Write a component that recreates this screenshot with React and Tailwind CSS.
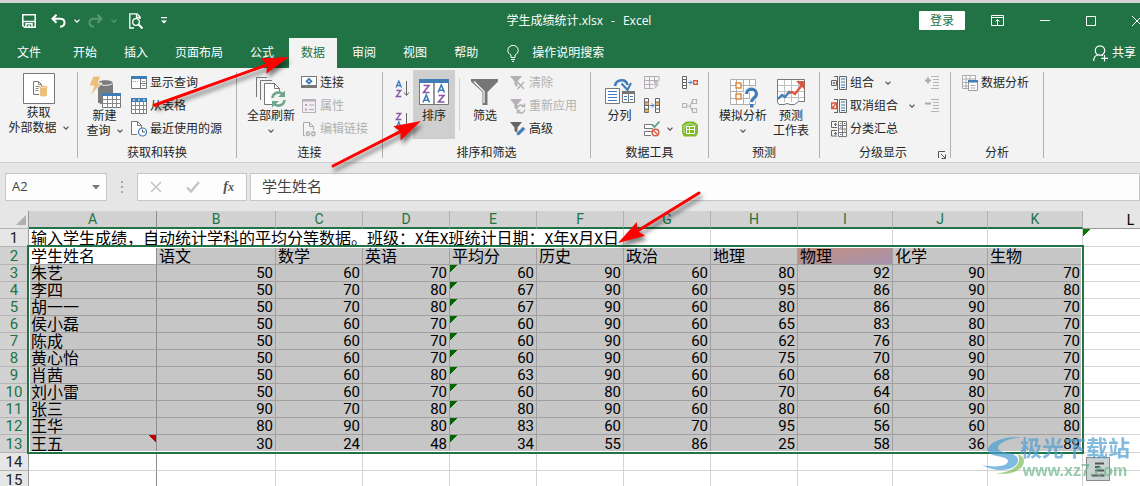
import clsx from "clsx";

const tabs = ["开始", "插入", "页面布局", "公式", "数据", "审阅", "视图", "帮助"];

const columns = [
  { id: "A", width: "w-[128px]" },
  { id: "B", width: "w-[119px]" },
  { id: "C", width: "w-[87px]" },
  { id: "D", width: "w-[87px]" },
  { id: "E", width: "w-[87px]" },
  { id: "F", width: "w-[87px]" },
  { id: "G", width: "w-[87px]" },
  { id: "H", width: "w-[87px]" },
  { id: "I", width: "w-[95px]" },
  { id: "J", width: "w-[95px]" },
  { id: "K", width: "w-[95px]" },
  { id: "L", width: "w-[95px]" },
];

const titleText = "输入学生成绩，自动统计学科的平均分等数据。班级：X年X班统计日期：X年X月X日";

const fields = ["学生姓名", "语文", "数学", "英语", "平均分", "历史", "政治", "地理", "物理", "化学", "生物"];

const students = [
  ["朱艺", 50, 60, 70, 60, 90, 60, 80, 92, 90, 70],
  ["李四", 50, 70, 80, 67, 90, 60, 95, 86, 90, 80],
  ["胡一一", 50, 70, 80, 67, 90, 60, 80, 86, 90, 70],
  ["侯小磊", 50, 60, 70, 60, 90, 60, 65, 83, 80, 70],
  ["陈成", 50, 60, 70, 60, 90, 60, 62, 76, 80, 70],
  ["黄心怡", 50, 60, 70, 60, 90, 60, 75, 70, 90, 70],
  ["肖茜", 50, 60, 80, 63, 90, 60, 60, 68, 90, 70],
  ["刘小雷", 50, 60, 70, 60, 80, 60, 70, 64, 80, 70],
  ["张三", 90, 70, 80, 80, 90, 60, 80, 60, 90, 80],
  ["王华", 80, 90, 80, 83, 60, 70, 95, 56, 60, 80],
  ["王五", 30, 24, 48, 34, 55, 86, 25, 58, 36, 89],
];

function Chevron({ className = "text-[#555]" }) {
  return (
    <svg viewBox="0 0 6 4" className={clsx("h-1 w-1.5 shrink-0", className)} fill="none" stroke="currentColor" strokeWidth="1.2">
      <path d="M0.5 0.7 3 3.2 5.5 0.7" />
    </svg>
  );
}

/* ---------- small 16px ribbon icons ---------- */

function Icon({ children }) {
  return (
    <svg viewBox="0 0 16 16" className="h-4 w-4 shrink-0" fill="none">
      {children}
    </svg>
  );
}

const ShowQueriesIcon = () => (
  <Icon>
    <path d="M.5 1.5h15v12H.5z" fill="#fff" stroke="#777" />
    <path d="M0 1h16v3H0z" fill="#3f7cb8" />
    <path d="M9.5 4v9.5M9.5 8.5h6" stroke="#777" />
    <path d="M2 6.5h1m1 0h1m1 0h1M11 6.5h3M11 10.5h3" stroke="#999" />
  </Icon>
);

const FromTableIcon = () => (
  <Icon>
    <path d="M.5 1.5h15v14H.5z" fill="#fff" stroke="#777" />
    <path d="M0 0h16v4H0z" fill="#3f7cb8" />
    <path d="M2 2h2M7 2h2M12 2h2" stroke="#fff" />
    <path d="M0 7.5h16M0 11.5h16M4.5 4v12M8.5 4v12M12.5 4v12" stroke="#888" />
  </Icon>
);

const RecentIcon = () => (
  <Icon>
    <path d="M6 13.5H.5V.5h6l4 4V7" fill="#fff" stroke="#777" />
    <path d="M6.5.5v4h4" stroke="#777" />
    <circle cx="11.5" cy="11" r="4" fill="#fff" stroke="#3f7cb8" strokeWidth="1.2" />
    <path d="M11.5 8.5V11H14" stroke="#555" />
  </Icon>
);

const ConnectionIcon = () => (
  <Icon>
    <path d="M3 1.5H.5v10h15v-10H13" fill="#fff" stroke="#777" />
    <path d="M.5 1.5h15v9H.5z" fill="#fff" stroke="#777" />
    <path d="M0 11h16v2H0z" fill="#777" />
    <path d="m8 3.800 2.400 2.400L8 8.600 5.600 6.200z" fill="#fff" stroke="#3f7cb8" strokeWidth="1.8" />
  </Icon>
);

const PropertiesIcon = () => (
  <Icon>
    <path d="M1.5 1.5h13v13h-13z" fill="#f3edf3" stroke="#b9b1b9" />
    <path d="M1 1h14v2.500H1z" fill="#b9b1b9" />
    <path d="M4 6h2v2H4zM4 10.5h2v2H4z" fill="#b0a8b0" />
    <path d="M8 7h5M8 11.5h5" stroke="#b0a8b0" />
  </Icon>
);

const EditLinksIcon = () => (
  <Icon>
    <path d="M4 14.5H2.5v-13h6l4 4V9" fill="#f6f2f6" stroke="#aaa" />
    <path d="M8.5 1.5v4h4" stroke="#aaa" />
    <path d="M8.5 11H6.7a1.8 1.8 0 0 0 0 3.5h1.8M10.5 11h2.3a1.8 1.8 0 0 1 0 3.5h-2.3M7.5 12.8h4" stroke="#aaa" strokeWidth="1.3" />
  </Icon>
);

const ClearIcon = () => (
  <Icon>
    <path d="M0 1h12L7.5 6.5V12l-3-2V6.5z" fill="#b8b0b8" />
    <path d="m7.5 7 6.5 7M14 7l-6.5 7" stroke="#b3b3b3" strokeWidth="1.5" />
  </Icon>
);

const ReapplyIcon = () => (
  <Icon>
    <path d="M0 1h12L7.5 6.5V12l-3-2V6.5z" fill="#b8b0b8" />
    <path d="M7 10.5a4 4 0 0 1 7-2M14.5 5.5v3h-3M15 11.5a4 4 0 0 1-7 2M7.5 15.5v-3h3" stroke="#b3b3b3" strokeWidth="1.5" />
  </Icon>
);

const AdvancedIcon = () => (
  <Icon>
    <path d="M0 1h12L7.5 6.5V12l-3-2V6.5z" fill="#666" />
    <path d="m6 15 1-3.5 6-6 2.5 2.5-6 6z" fill="#3f7cb8" stroke="#f3f3f3" strokeWidth=".5" />
    <path d="m6 15 .5-1.800 1.300 1.300z" fill="#fff" />
  </Icon>
);

const FlashFillIcon = () => (
  <Icon>
    <path d="M15 6V1.5H.5v12H9M.5 5.5H14M.5 9.5H9M5.5 1v12M10.5 1v7" stroke="#b5adb5" />
    <path d="M11 6h4l-2 3h2.500L10 15l1.500-4.500H9.500z" fill="#c7bfc7" />
  </Icon>
);

const DuplicatesIcon = () => (
  <Icon>
    <path d="M.5.5h4v14h-4zM11.5.5h4v14h-4z" fill="#fff" stroke="#666" />
    <path d="M1 4h3.500v3.500H1zM1 11h3.500v3H1zM12 4h3v3.500h-3z" fill="#e8b15c" />
    <path d="M0 4h5M0 7.500h5M0 11h5M11 4h5M11 7.500h5M11 11h5" stroke="#666" />
    <path d="M5.500 7.500h4M8 5.500l2 2-2 2" stroke="#3f7cb8" />
  </Icon>
);

const ValidationIcon = () => (
  <Icon>
    <path d="M8 3.5H.5v4H9M8 10.5H.5v4H7" fill="#fff" stroke="#777" />
    <path d="m8 3.5 2.500 2.500L15.500.5" stroke="#5f9f86" strokeWidth="1.8" />
    <circle cx="11.5" cy="11.5" r="3.3" fill="#fff" stroke="#d65a41" strokeWidth="1.5" />
    <path d="m9.5 9.5 4 4" stroke="#d65a41" strokeWidth="1.3" />
  </Icon>
);

const ConsolidateIcon = () => (
  <Icon>
    <path d="M.5 1.5h4v12h-4zM.5 4.5h4M.5 7.5h4M.5 10.5h4" fill="#fff" stroke="#666" />
    <path d="M6 7.5h3.5M8 5.5l2 2-2 2" stroke="#3f7cb8" />
    <path d="M11.7 5.7h3.6v3.6h-3.6z" fill="#fff" stroke="#d65a41" strokeWidth="1.4" />
  </Icon>
);

const RelationsIcon = () => (
  <Icon>
    <path d="M5 8h3l2-4.5M8 8l2 4.5M.5 5.5h4v4h-4zM10.5 1.5h4v4h-4zM10.5 10.5h4v4h-4z" stroke="#b5b5b5" strokeWidth="1.2" />
  </Icon>
);

const DataModelIcon = () => (
  <Icon>
    <path d="M0 4 4 .5h8L16 4v8l-2 3.500H2L0 12z" fill="#7fba2c" />
    <path d="M4.5 5.5h8v7h-8zM7.5 5v8M4 8.500h9" stroke="#fff" />
    <path d="m2 12V5l6-2.500L14 5" stroke="#c9e59f" />
  </Icon>
);

const GroupIcon = ({ remove }) => (
  <Icon>
    <path d="M3 1.5h4M3 14.5h4M6.5 1v14M8.5 1.5h7v13h-7z" stroke="#666" />
    <path d="M10 4h4M10 7h4M10 10h4M10 12.5h4" stroke="#3f7cb8" strokeWidth="1.2" />
    {remove ? (
      <path d="M.7 5h5v5.500h-5zM1 10.5 5.500 5" fill="#fff" stroke="#d65a41" strokeWidth="1.4" />
    ) : (
      <path d="M.5 5.5h5v5h-5zM1.5 8h3M3 6.500v3" fill="#fff" stroke="#666" />
    )}
  </Icon>
);

const SubtotalIcon = () => (
  <Icon>
    <path d="M7.5.5h8v15h-8zM7.5 4.5h8M7.5 8h8M7.5 11.5h8M11.5 0v16" fill="#fff" stroke="#777" />
    <path d="M6 .5H.5v6H6M6 9.5H.5V15H6M3 3.5h3M4.5 2v3M3 12.5h3M4.5 11v3" stroke="#666" />
    <path d="M9 6.200h1.500M13 2.500h1.500M9 13.500h1.500" stroke="#3f7cb8" />
    <path d="M13 9.800h1.500M9 2.500h1.500" stroke="#e08b3e" />
  </Icon>
);

const DetailIcon = ({ plus }) => (
  <Icon>
    <path d="M7 1.5h8M9 4.5h6M9 7.5h6M9 10.5h6M7 13.5h8" stroke="#b5b5b5" />
    <path d={plus ? "M1 5.5h6M4 2.5v6" : "M1 5.5h6"} stroke="#aaa" strokeWidth="2" />
  </Icon>
);

const AnalysisIcon = () => (
  <Icon>
    <path d="M.5.5h13v13H.5zM.5 4h13M.5 7.5h13M.5 11h13M4 .5v13M8 .5v13" fill="#fff" stroke="#aaa" />
    <path d="M6.5 6.5h9v9h-9z" fill="#fff" stroke="#999" />
    <path d="M6 5h10v2.500H6z" fill="#3f7cb8" />
    <path d="M8.5 10.5h5M8.5 13h5" stroke="#aaa" />
  </Icon>
);

/* ---------- large 32px ribbon icons ---------- */

function LargeIcon({ children }) {
  return (
    <svg viewBox="0 0 32 32" className="h-8 w-8 shrink-0" fill="none">
      {children}
    </svg>
  );
}

const ExternalDataIcon = () => (
  <LargeIcon>
    <path d="M.5.5h31v30H.5z" fill="#fff" stroke="#777" />
    <path d="M16 21.5h-5.500v-13h5l3 3V13" stroke="#777" />
    <path d="M15.5 8.500v3h3M12.500 13.500h4M12.500 15.500h3M12.500 17.500h3" stroke="#888" />
    <path d="M17 14.500v7.500c0 2 7 2 7 0v-7.500z" fill="#ecc07b" />
    <ellipse cx="20.5" cy="14.5" rx="3.5" ry="1.5" fill="#f3d9ab" stroke="#e2b368" />
  </LargeIcon>
);

const NewQueryIcon = () => (
  <LargeIcon>
    <path d="M9 6v20c0 3 15 3 15 0V6z" fill="#7b7b7b" />
    <ellipse cx="16.5" cy="6.500" rx="7.500" ry="2.800" fill="#7b7b7b" stroke="#f3f3f3" />
    <path d="M4 0h8L9 7h4L1 20l4-10H0z" fill="#ecc07b" stroke="#f3f3f3" />
    <path d="M13.5 18.500h18v13h-18z" fill="#fff" stroke="#777" />
    <path d="M13 17h19v3H13z" fill="#3f7cb8" />
    <path d="M13 23.500h19M13 27.500h19M18.500 20v12M23.500 20v12M27.500 20v12" stroke="#888" />
  </LargeIcon>
);

const RefreshAllIcon = () => (
  <LargeIcon>
    <path d="M1.5 21V1.500H12M5.500 24V4.500H17" stroke="#777" />
    <path d="M9.5 28.500v-21h10l5 5v16z" fill="#fff" stroke="#777" />
    <path d="M19.5 7.500v5h5" stroke="#777" />
    <circle cx="23.5" cy="23" r="8" fill="#f3f3f3" />
    <path d="M17.5 22a6 6 0 0 1 10.500-3.500M29.500 24a6 6 0 0 1-10.500 3.500" stroke="#6fa68d" strokeWidth="2.6" />
    <path d="M30 14.500v6.500h-7zM17 31.500V25h7z" fill="#6fa68d" />
  </LargeIcon>
);

const SortIcon = () => (
  <LargeIcon>
    <path d="M1.5 3.500h29v25h-29z" fill="#fff" stroke="#777" />
    <path d="M1 3h30v4H1z" fill="#3f7cb8" />
    <path d="M15 7h2v21h-2z" fill="#999" />
    <path d="M5.5 9.500h5.500l-5.500 7h6" stroke="#8a55a8" strokeWidth="1.6" />
    <path d="m5 26.500 3.300-7.500 3.200 7.500M6 24.200h4.500" stroke="#3f7cb8" strokeWidth="1.6" />
    <path d="m20 16.500 3.300-7.500 3.200 7.500M21 14.200h4.500" stroke="#3f7cb8" strokeWidth="1.6" />
    <path d="M20.5 19.500H26l-5.500 6.500h6" stroke="#8a55a8" strokeWidth="1.6" />
  </LargeIcon>
);

const FilterIcon = () => (
  <LargeIcon>
    <path d="M2 3h27v2.500L18.500 16v13h-5V16L2 5.500z" fill="#767676" />
    <path d="m5 5.500 10 10V27" stroke="#fff" strokeWidth="1.2" />
  </LargeIcon>
);

const TextToColumnsIcon = () => (
  <LargeIcon>
    <path d="M1.5 12.500h14v15h-14z" fill="#fff" stroke="#777" />
    <path d="M4 15.500h9M4 18.500h9M4 21.500h9M4 24.500h9" stroke="#3f7cb8" />
    <path d="M18.5 15.500h12v11h-12z" fill="#fff" stroke="#777" />
    <path d="M18 15h13v3H18z" fill="#777" />
    <path d="M24.5 18v8.500" stroke="#777" />
    <path d="M20 20.500h3M20 23.500h3M26 20.500h3M26 23.500h3" stroke="#3f7cb8" />
    <path d="M11 10c1-7 11-8 12.500-1" stroke="#3f7cb8" strokeWidth="2.6" />
    <path d="M17.5 7.500l6 6.500 3.500-7" stroke="#3f7cb8" strokeWidth="2" />
  </LargeIcon>
);

const WhatIfIcon = () => (
  <LargeIcon>
    <path d="M3.5 3.500h25v25h-25zM3.500 9.500h25M3.500 15.500h25M3.500 22.500h25M9.500 3.500v25M16.500 3.500v25M22.500 3.500v25" fill="#fff" stroke="#b0b0b0" />
    <path d="M9 7h5v5H9zM9 18h5v5H9z" fill="#fff" stroke="#e08b3e" strokeWidth="1.5" />
    <path d="M19 18c0-7 11-6.500 11 0 0 4-5.500 4-5.500 8.500" stroke="#f3f3f3" strokeWidth="6" />
    <path d="M19.5 18c0-6.500 10-6.500 10 0 0 4-5 4-5 8" stroke="#3f7cb8" strokeWidth="3.2" />
    <path d="M23 28h3.500v3.500H23z" fill="#3f7cb8" />
  </LargeIcon>
);

const ForecastIcon = () => (
  <LargeIcon>
    <path d="M2.5 3.500h27v22h-6l-4 3H15l-3-1-3 1H4l-1.500-2z" fill="#fff" stroke="#777" />
    <path d="M3 9.500h26M3 15.500h26M3 21.500h26M9.500 4v22M16.500 4v22M23.500 4v21" stroke="#c0c0c0" />
    <path d="m3 23 4-4 3 2 5-6" stroke="#3f7cb8" strokeWidth="2.4" />
    <path d="m14 17 3-1 3 2 7-9" stroke="#d65a41" strokeWidth="2.4" />
    <path d="M21 5h8.500v8.500z" fill="#d65a41" />
  </LargeIcon>
);

const SortDirIcon = ({ up }) => (
  <svg viewBox="0 0 15 18" className="h-[18px] w-[15px]" fill="none">
    <path d={up ? "m1 16.500 2.800-6.500 2.700 6.500M2 14.500h3.700" : "m1 7.500L3.800 1l2.700 6.500M2 5.500h3.700"} stroke="#3f7cb8" strokeWidth="1.3" />
    <path d={up ? "M1.300 1.500h4.500l-4.500 6h5" : "M1.300 10.500h4.500l-4.500 6h5"} stroke="#8a55a8" strokeWidth="1.3" />
    <path d="M11.5 1v14M9 12.500l2.500 3 2.500-3" stroke="#666" />
  </svg>
);

/* ---------- ribbon pieces ---------- */

function Group({ label, width, children, launcher }) {
  return (
    <section className={clsx("flex shrink-0", width)}>
      <div className="flex min-w-0 flex-1 flex-col">
        <div className="flex h-[71px] pt-0.5">{children}</div>
        <div className="flex h-[23px] items-center justify-center pt-1">
          {launcher && <span className="flex-1" />}
          <h2>{label}</h2>
          {launcher && (
            <button aria-label="分级显示设置" className="flex flex-1 justify-end pr-1">
              <svg viewBox="0 0 8 8" className="mt-1 h-2 w-2" fill="none" stroke="#555">
                <path d="M.5 7V.5H7M3 3l4 4M7.500 3.500v4h-4" />
              </svg>
            </button>
          )}
        </div>
      </div>
      <span className="my-1 w-px bg-[#b1b1b1]" />
    </section>
  );
}

function Big({ icon, lines, menu, className }) {
  return (
    <button className={clsx("flex h-[69px] shrink-0 flex-col items-center leading-[15px]", className)}>
      {icon}
      <span className="whitespace-nowrap">{lines[0]}</span>
      {(lines[1] || menu) && (
        <span className="flex h-[15px] items-center gap-1.5 whitespace-nowrap">
          {lines[1]}
          {menu && <Chevron />}
        </span>
      )}
    </button>
  );
}

function Small({ icon, text, label, disabled, menu }) {
  return (
    <button
      disabled={disabled}
      aria-label={label}
      className={clsx("flex h-[23px] items-center gap-[3px] pt-0.5 whitespace-nowrap", disabled && "text-[#b1b1b1]")}
    >
      {icon}
      {text}
      {menu && (
        <span className="pl-2">
          <Chevron />
        </span>
      )}
    </button>
  );
}

function Ribbon() {
  return (
    <div className="flex h-[95px] shrink-0 overflow-hidden border-b border-[#d0d0d0] bg-[#f3f3f3] text-xs text-[#262626]">
      <Group label="" width="w-[78px]">
        <Big icon={<ExternalDataIcon />} lines={["获取", "外部数据"]} menu className="w-full pt-[3px]" />
      </Group>
      <Group label="获取和转换" width="w-[159px]">
        <Big icon={<NewQueryIcon />} lines={["新建", "查询"]} menu className="w-[53px] pt-1.5" />
        <div>
          <Small icon={<ShowQueriesIcon />} text="显示查询" />
          <Small icon={<FromTableIcon />} text="从表格" />
          <Small icon={<RecentIcon />} text="最近使用的源" />
        </div>
      </Group>
      <Group label="连接" width="w-[146px]">
        <Big icon={<RefreshAllIcon />} lines={["全部刷新"]} menu className="w-16 pt-1.5 pl-1" />
        <div>
          <Small icon={<ConnectionIcon />} text="连接" />
          <Small icon={<PropertiesIcon />} text="属性" disabled />
          <Small icon={<EditLinksIcon />} text="编辑链接" disabled />
        </div>
      </Group>
      <Group label="排序和筛选" width="w-[208px]">
        <div className="flex w-[30px] flex-col items-end gap-3.5 pt-2.5 pr-[3px]">
          <button aria-label="升序">
            <SortDirIcon />
          </button>
          <button aria-label="降序">
            <SortDirIcon up />
          </button>
        </div>
        <Big icon={<SortIcon />} lines={["排序"]} className="w-[42px] bg-[#cfcfcf] pt-1.5" />
        <span className="my-2 ml-1 w-px bg-[#d0d0d0]" />
        <Big icon={<FilterIcon />} lines={["筛选"]} className="w-[50px] pt-1.5" />
        <div>
          <Small icon={<ClearIcon />} text="清除" disabled />
          <Small icon={<ReapplyIcon />} text="重新应用" disabled />
          <Small icon={<AdvancedIcon />} text="高级" />
        </div>
      </Group>
      <Group label="数据工具" width="w-[118px]">
        <Big icon={<TextToColumnsIcon />} lines={["分列"]} className="w-[53px] pt-1.5 pl-1" />
        <div className="grid flex-1 grid-cols-[38px_1fr]">
          <Small icon={<FlashFillIcon />} label="快速填充" disabled />
          <Small icon={<ConsolidateIcon />} label="合并计算" />
          <Small icon={<DuplicatesIcon />} label="删除重复值" />
          <Small icon={<RelationsIcon />} label="关系" disabled />
          <button aria-label="数据验证" className="flex h-[23px] items-center gap-[7px] pt-0.5">
            <ValidationIcon />
            <Chevron />
          </button>
          <Small icon={<DataModelIcon />} label="管理数据模型" />
        </div>
      </Group>
      <Group label="预测" width="w-[111px]">
        <Big icon={<WhatIfIcon />} lines={["模拟分析"]} menu className="w-[62px] pt-1.5 pl-1.5" />
        <Big icon={<ForecastIcon />} lines={["预测", "工作表"]} className="w-10 pt-1.5" />
      </Group>
      <Group label="分级显示" width="w-[131px]" launcher>
        <div className="flex-1 pl-[11px]">
          <Small icon={<GroupIcon />} text="组合" menu />
          <Small icon={<GroupIcon remove />} text="取消组合" menu />
          <Small icon={<SubtotalIcon />} text="分类汇总" />
        </div>
        <div className="pr-2.5">
          <Small icon={<DetailIcon plus />} label="显示明细数据" disabled />
          <Small icon={<DetailIcon />} label="隐藏明细数据" disabled />
        </div>
      </Group>
      <Group label="分析" width="w-[93px]">
        <div className="pl-[11px]">
          <Small icon={<AnalysisIcon />} text="数据分析" />
        </div>
      </Group>
    </div>
  );
}

/* ---------- title bar and tabs ---------- */

function TitleBar() {
  return (
    <div className="grid h-[35px] grid-cols-[1fr_auto_1fr] items-center">
      <div className="flex items-center pl-[22px]">
        <button aria-label="保存">
          <svg viewBox="0 0 14 14" className="h-3.5 w-3.5" fill="none" stroke="#fff" strokeWidth="1.5">
            <path d="M.8.8h12.400v12.400H2.500L.8 11.500zM1 7.500h12M4 13V9.800h6V13M7 11v2" />
          </svg>
        </button>
        <button aria-label="撤消" className="ml-[15px] flex items-center gap-2">
          <svg viewBox="0 0 15 14" className="h-3.5 w-[15px]" fill="none" stroke="#fff" strokeWidth="2">
            <path d="M5.5.8 1.500 4.800l4 4M2 4.800h7c6 0 6 7.500 0 8" />
          </svg>
          <Chevron className="text-white" />
        </button>
        <button aria-label="恢复" disabled className="ml-2 flex items-center gap-2 opacity-25">
          <svg viewBox="0 0 15 14" className="h-3.5 w-[15px]" fill="none" stroke="#fff" strokeWidth="2">
            <path d="m9.5.8 4 4-4 4M13 4.800H6c-6 0-6 7.500 0 8" />
          </svg>
          <Chevron className="text-white" />
        </button>
        <button aria-label="打印预览" className="ml-3">
          <svg viewBox="0 0 14 16" className="h-4 w-3.5" fill="none" stroke="#fff" strokeWidth="1.3">
            <path d="M5 15H.8V.8H8l3 3V6M7.500 1v3.500H11" />
            <circle cx="7" cy="9" r="3.3" />
            <path d="m9.5 11.500 4 4" strokeWidth="2" />
          </svg>
        </button>
        <button aria-label="自定义快速访问工具栏" className="ml-[18px]">
          <svg viewBox="0 0 6 7" className="h-[7px] w-1.5" fill="#fff">
            <path d="M0 0h6v1.200H0zM0 3.500h6L3 6.500z" />
          </svg>
        </button>
      </div>
      <h1 className="flex gap-2 pl-[18px] text-xs">
        <span>学生成绩统计.xlsx</span>
        <span>-</span>
        <span>Excel</span>
      </h1>
      <div className="flex items-center justify-end">
        <button className="mr-[26px] h-[19px] rounded-[1px] bg-white px-[11px] text-xs leading-[19px] text-[#217346]">登录</button>
        <div className="-mr-0.5 flex items-center gap-9">
          <button aria-label="功能区显示选项">
            <svg viewBox="0 0 13 11" className="h-[11px] w-[13px]" fill="none" stroke="#fff">
              <path d="M.5.5h12v10H.5zM.5 2.500h12M6.500 10V5M4.500 6.500l2-2 2 2" />
            </svg>
          </button>
          <button aria-label="最小化">
            <svg viewBox="0 0 10 10" className="h-2.5 w-2.5" stroke="#fff">
              <path d="M0 4.500h10" />
            </svg>
          </button>
          <button aria-label="最大化">
            <svg viewBox="0 0 10 10" className="h-2.5 w-2.5" fill="none" stroke="#fff">
              <path d="M.5.5h9v9h-9z" />
            </svg>
          </button>
          <button aria-label="关闭">
            <svg viewBox="0 0 10 10" className="h-2.5 w-2.5" stroke="#fff">
              <path d="m0 0 10 10M10 0 0 10" />
            </svg>
          </button>
        </div>
      </div>
    </div>
  );
}

function Tabs() {
  return (
    <nav className="flex h-[30px] items-stretch gap-[3px] pr-1 pl-[5px] text-xs">
      <button className="mr-[5px] px-3">文件</button>
      {tabs.map((t) => (
        <button key={t} className={clsx("px-3", t === "数据" && "bg-[#f3f3f3] text-[#217346]")}>
          {t}
        </button>
      ))}
      <button className="ml-3.5 flex items-center gap-[13px]">
        <svg viewBox="0 0 12 17" className="h-[17px] w-3" fill="none" stroke="#fff">
          <path d="M4 12.500V10C2 9 .8 7.500.8 5.500a5.200 5.200 0 0 1 10.400 0c0 2-1.200 3.500-3.200 4.500v2.500zM4 14.500h4M5 16.500h2" />
        </svg>
        操作说明搜索
      </button>
      <button className="ml-auto flex items-center gap-1">
        <svg viewBox="0 0 15 17" className="h-[17px] w-[15px]" fill="none" stroke="#fff" strokeWidth="1.2">
          <circle cx="7" cy="5.500" r="4.700" />
          <path d="M.6 16c0-3 2-5.500 4.500-6.300M8.500 10l1.500.8M11.500 10v6.500M8.200 13.300H15" />
        </svg>
        共享
      </button>
    </nav>
  );
}

function FormulaBar() {
  return (
    <div className="flex h-12 shrink-0 items-start bg-[#e6e6e6] pt-2.5 pl-[5px] text-[#444]">
      <div className="flex h-7 w-[102px] items-center border border-[#c6c6c6] bg-[#fdfdfd] px-1.5">
        <input aria-label="名称框" defaultValue="A2" className="min-w-0 flex-1 text-[13px] outline-none" />
        <svg viewBox="0 0 8 5" className="h-[5px] w-2" fill="#777">
          <path d="M0 0h8L4 4.500z" />
        </svg>
      </div>
      <svg viewBox="0 0 2 12" className="mx-3.5 mt-2 h-3 w-0.5" fill="#aaa">
        <path d="M0 0h2v2H0zM0 5h2v2H0zM0 10h2v2H0z" />
      </svg>
      <div className="flex h-7 w-[110px] items-center justify-between border border-[#c6c6c6] bg-[#fdfdfd] px-3">
        <button aria-label="取消">
          <svg viewBox="0 0 12 12" className="h-3 w-3" stroke="#c4c4c4" strokeWidth="1.6">
            <path d="m1 1 10 10M11 1 1 11" />
          </svg>
        </button>
        <button aria-label="输入">
          <svg viewBox="0 0 14 12" className="h-3 w-3.5" fill="none" stroke="#c4c4c4" strokeWidth="2.4">
            <path d="m1 6.500 4 4L13 1" />
          </svg>
        </button>
        <button aria-label="插入函数" className="font-['Liberation_Serif',serif] text-sm leading-4 font-bold text-[#555] italic">
          f<span className="text-xs">x</span>
        </button>
      </div>
      <input
        aria-label="编辑栏"
        defaultValue="学生姓名"
        className="ml-[3px] h-7 min-w-0 flex-1 border border-[#c6c6c6] bg-[#fdfdfd] pb-1 pl-[11px] text-[15px] leading-5 outline-none"
      />
    </div>
  );
}

/* ---------- worksheet ---------- */

function RowHead({ n, selected }) {
  return (
    <th
      className={clsx(
        "border-r border-b border-r-[#9a9a9a] border-b-[#b5b5b5] p-0 pt-px text-center text-[15px] font-normal",
        selected ? "bg-[#d2d2d2] text-[#217346]" : "bg-[#e6e6e6] text-[#222]"
      )}
    >
      {n}
    </th>
  );
}

function BlankRow({ n }) {
  return (
    <tr className="h-[18px]">
      <RowHead n={n} />
      {columns.map((c) => (
        <td key={c.id} className={clsx("border-r border-b border-b-[#d4d4d4]", c.id === "A" ? "border-r-[#8c8c8c]" : "border-r-[#d4d4d4]")} />
      ))}
    </tr>
  );
}

function Sheet() {
  return (
    <div className="relative min-h-0 flex-1 overflow-hidden bg-white">
      <table className="w-[1178px] table-fixed border-separate border-spacing-0 font-['Roboto','Noto_Sans_CJK_SC',sans-serif] leading-[15px] text-black">
        <colgroup>
          <col className="w-[29px]" />
          {columns.map((c) => (
            <col key={c.id} className={c.width} />
          ))}
        </colgroup>
        <thead>
          <tr className="h-[18px]">
            <th className="border-r border-b border-r-[#9a9a9a] border-b-[#b5b5b5] bg-[#e6e6e6] p-0">
              <svg viewBox="0 0 10 10" className="ml-4 h-2.5 w-2.5" fill="#b1b1b1">
                <path d="M10 0v10H0z" />
              </svg>
            </th>
            {columns.map((c) => (
              <th
                key={c.id}
                className={clsx(
                  "p-0 pt-px text-center text-sm leading-[15px] font-normal",
                  c.id === "L"
                    ? "border-b border-[#9a9a9a] bg-[#e6e6e6] text-black"
                    : "border-r border-b-2 border-b-[#217346] bg-[#d2d2d2] text-[#217346]",
                  c.id === "A" ? "border-r-[#8c8c8c]" : "border-r-[#b1b1b1]"
                )}
              >
                {c.id}
              </th>
            ))}
          </tr>
        </thead>
        <tbody>
          <tr className="h-[18px]">
            <RowHead n={1} />
            {columns.map((c) => (
              <td
                key={c.id}
                className={clsx(
                  "border-b border-b-[#d4d4d4] p-0 pt-0.5 pl-0.5 text-base leading-[15px] whitespace-nowrap",
                  c.id === "A" && "border-r border-r-[#8c8c8c]",
                  c.id >= "F" && "border-r border-r-[#d4d4d4]",
                  c.id === "L" && "bg-[linear-gradient(135deg,#007a00_5px,transparent_5px)]"
                )}
              >
                {c.id === "A" &&
                  titleText.split(/(X)/).map((part, i) =>
                    part === "X" ? (
                      <span key={i} className="text-sm leading-none">
                        X
                      </span>
                    ) : (
                      part
                    )
                  )}
              </td>
            ))}
          </tr>
          <tr className="h-[18px]">
            <RowHead n={2} selected />
            {fields.map((f, i) => (
              <td
                key={f}
                className={clsx(
                  "border-r border-b border-b-[#a0a0a0] p-0 pt-0.5 pl-0.5 text-base leading-[15px]",
                  i === 0 ? "border-r-[#8c8c8c] bg-white" : "border-r-[#a0a0a0]",
                  i === 8 && "bg-linear-to-br from-[#c4907c] to-[#a791ad]",
                  i !== 0 && i !== 8 && "bg-[#c6c6c6]"
                )}
              >
                {f}
              </td>
            ))}
            <td className="border-r border-b border-[#d4d4d4]" />
          </tr>
          {students.map((row, r) => (
            <tr key={row[0]} className={r === students.length - 1 ? "h-[18px]" : "h-[17px]"}>
              <RowHead n={r + 3} selected />
              {row.map((v, i) => (
                <td
                  key={i}
                  className={clsx(
                    "border-r border-b border-b-[#a0a0a0] bg-[#c6c6c6] p-0 pt-px",
                    i === 0
                      ? "border-r-[#8c8c8c] pl-0.5 text-left text-base leading-[15px]"
                      : "border-r-[#a0a0a0] pr-0.5 text-right text-[15px]",
                    i === 4 && "bg-[linear-gradient(135deg,#006400_5px,transparent_5px)]",
                    v === "王五" && "bg-[linear-gradient(225deg,#c00000_5px,transparent_5px)]"
                  )}
                >
                  {v}
                </td>
              ))}
              <td className="border-r border-b border-[#d4d4d4]" />
            </tr>
          ))}
          <BlankRow n={14} />
          <BlankRow n={15} />
        </tbody>
      </table>

      {/* selection frame A2:K13 */}
      <div className="pointer-events-none absolute top-[34px] left-[27px] h-[209px] w-[1057px] border-2 border-[#217346] shadow-[inset_0_0_0_1px_#fff]" />

      <button aria-label="快速分析" className="absolute top-[246px] left-[1086px] flex h-6 w-6 items-center justify-center border border-[#8a8a8a] bg-[#c9d3d3]">
        <svg viewBox="0 0 16 16" className="h-4 w-4" fill="none" stroke="#555">
          <path d="M1.5 14.500h13M5 2.500h9M5 6h5M5 9.500h9" strokeWidth="2" />
        </svg>
      </button>
      <Watermark />
    </div>
  );
}

function Watermark() {
  return (
    <div className="pointer-events-none absolute top-[222px] right-2.5 flex items-center opacity-70">
      <svg viewBox="0 0 42 42" className="-mr-1 h-[42px] w-[42px]" fill="none">
        <path d="M40 2C22 1 6 7 6 15c0 8 20 5 20 11 0 5-12 7-26 4 16 9 36 5 36-5 0-9-20-6-20-12 0-4 8-9 24-11z" fill="#4a9fd4" />
        <path d="M35 19c7 8-4 19-21 19 12 3 28-2 28-12 0-3-3-6-7-7z" fill="#7fbf5a" />
      </svg>
      <div className="text-center font-bold">
        <div className="text-[22px] leading-7 text-[#4f9fd0]">极光下载站</div>
        <div className="pt-0.5 font-['Liberation_Sans',sans-serif] text-base leading-4 text-[#6bb58a]">www.xz7.com</div>
      </div>
    </div>
  );
}

/* ---------- red pointer arrows ---------- */

const pointers = [
  { from: [155, 105], to: [289, 57] },
  { from: [333, 166], to: [421, 121] },
  { from: [699, 193], to: [618, 243] },
];

function Arrow({ from, to }) {
  const angle = (Math.atan2(to[1] - from[1], to[0] - from[0]) * 180) / Math.PI;
  const len = Math.hypot(to[0] - from[0], to[1] - from[1]);
  return (
    <g transform={`translate(${from[0]} ${from[1]}) rotate(${angle})`}>
      <path d={`M0 0H${len - 20}`} stroke="#f00" strokeWidth="3" strokeLinecap="round" />
      <path d={`M${len} 0L${len - 27} 8L${len - 23} 0L${len - 27} -8Z`} fill="#f00" />
    </g>
  );
}

export default function App() {
  return (
    <div className="relative flex h-screen flex-col overflow-hidden bg-[#e6e6e6] font-['Open_Sans','Noto_Sans_CJK_SC',sans-serif]">
      <header className="shrink-0 border-t-[3px] border-[#d3d3d3] bg-[#217346] text-white">
        <TitleBar />
        <Tabs />
      </header>
      <Ribbon />
      <FormulaBar />
      <Sheet />
      <svg className="pointer-events-none absolute top-0 left-0 h-full w-full drop-shadow-[2px_4px_2px_rgba(0,0,0,0.5)]">
        {pointers.map((p) => (
          <Arrow key={p.to[0]} {...p} />
        ))}
      </svg>
    </div>
  );
}
